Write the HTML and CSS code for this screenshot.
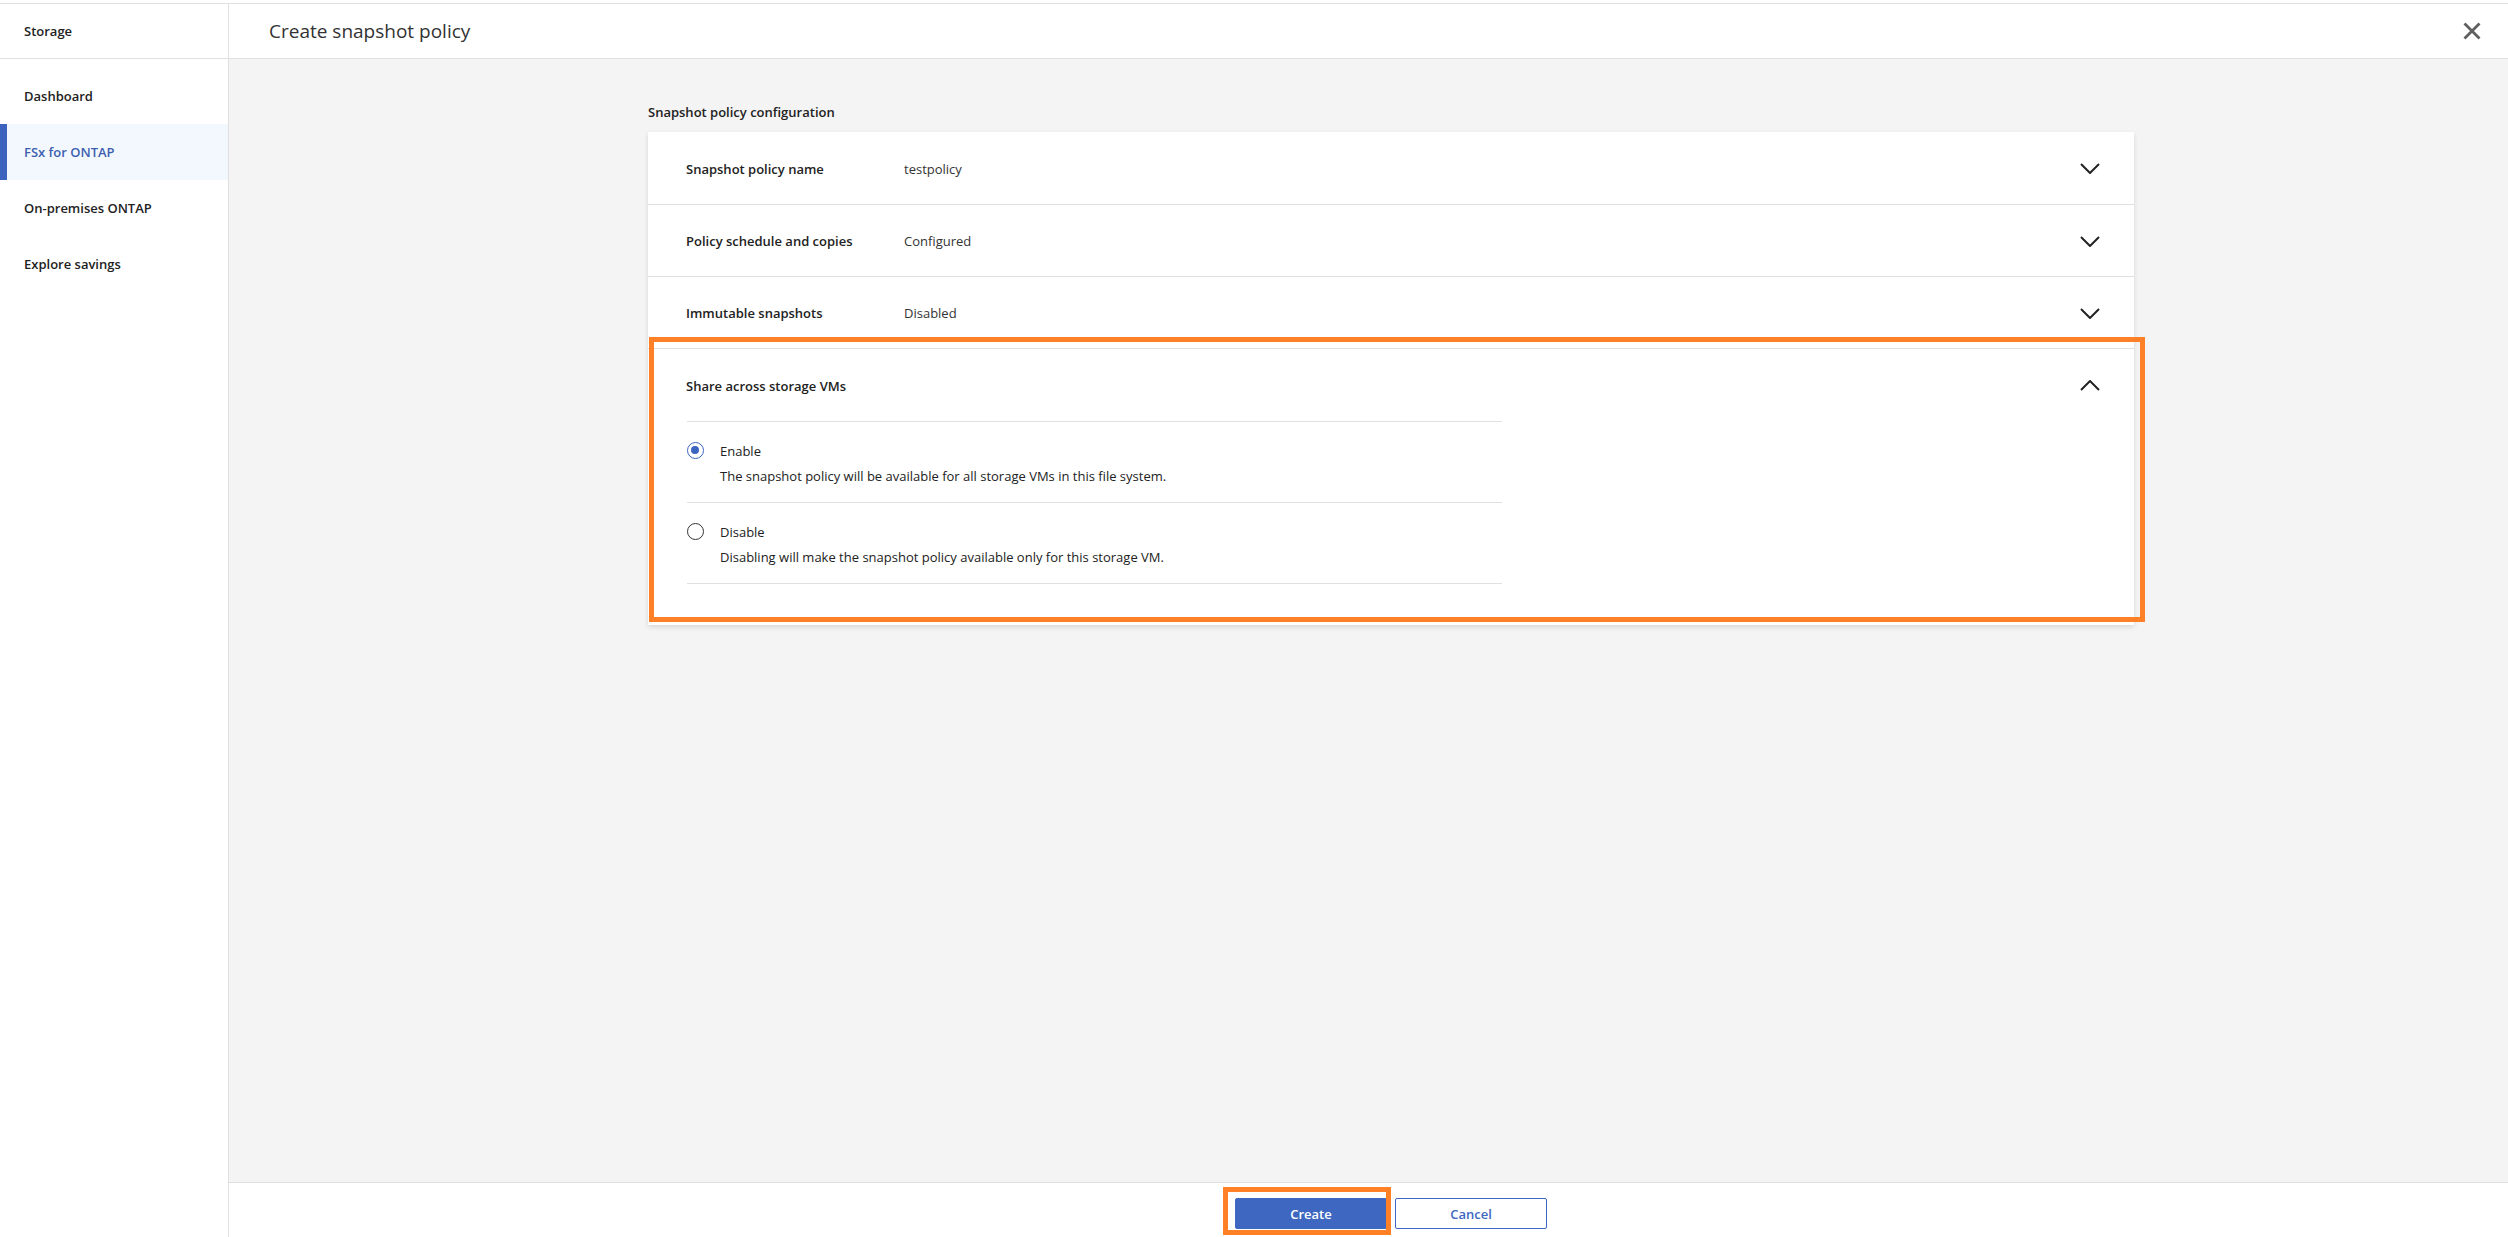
FILE: index.html
```html
<!DOCTYPE html>
<html lang="en">
<head>
    <meta charset="UTF-8">
    <meta name="viewport" content="width=device-width, initial-scale=1.0">
    <title>Create snapshot policy</title>
    <link rel="stylesheet" href="styles.css">
</head>
<body>
    <div class="app">
        <aside class="sidebar">
            <div class="sidebar-head">Storage</div>
            <nav class="nav">
                <a class="nav-item">Dashboard</a>
                <a class="nav-item active">FSx for ONTAP</a>
                <a class="nav-item">On-premises ONTAP</a>
                <a class="nav-item">Explore savings</a>
            </nav>
        </aside>

        <main class="main">
            <header class="main-head">
                <h1>Create snapshot policy</h1>
                <button class="close" aria-label="Close">
                    <svg width="18" height="18" viewBox="0 0 18 18"><path d="M1.5 1.5 L16.5 16.5 M16.5 1.5 L1.5 16.5" stroke="#5f5f5f" stroke-width="2.8" fill="none"/></svg>
                </button>
            </header>

            <section class="content">
                <div class="config">
                    <div class="config-title">Snapshot policy configuration</div>
                    <div class="card">
                        <div class="row">
                            <span class="row-label">Snapshot policy name</span>
                            <span class="row-value">testpolicy</span>
                            <svg class="chevron" width="20" height="11" viewBox="0 0 20 11"><polyline points="1,1 10,10 19,1" stroke="#222" stroke-width="2" fill="none"/></svg>
                        </div>
                        <div class="row">
                            <span class="row-label">Policy schedule and copies</span>
                            <span class="row-value">Configured</span>
                            <svg class="chevron" width="20" height="11" viewBox="0 0 20 11"><polyline points="1,1 10,10 19,1" stroke="#222" stroke-width="2" fill="none"/></svg>
                        </div>
                        <div class="row">
                            <span class="row-label">Immutable snapshots</span>
                            <span class="row-value">Disabled</span>
                            <svg class="chevron" width="20" height="11" viewBox="0 0 20 11"><polyline points="1,1 10,10 19,1" stroke="#222" stroke-width="2" fill="none"/></svg>
                        </div>
                        <div class="section open">
                            <div class="row-head">
                                <span class="row-label">Share across storage VMs</span>
                                <svg class="chevron" width="20" height="11" viewBox="0 0 20 11"><polyline points="1,10 10,1 19,10" stroke="#222" stroke-width="2" fill="none"/></svg>
                            </div>
                            <div class="options">
                                <label class="option">
                                    <span class="radio checked"></span>
                                    <span class="option-text">
                                        <span class="option-title">Enable</span>
                                        <span class="option-desc">The snapshot policy will be available for all storage VMs in this file system.</span>
                                    </span>
                                </label>
                                <label class="option">
                                    <span class="radio"></span>
                                    <span class="option-text">
                                        <span class="option-title">Disable</span>
                                        <span class="option-desc">Disabling will make the snapshot policy available only for this storage VM.</span>
                                    </span>
                                </label>
                            </div>
                            <div class="highlight section-mark"></div>
                        </div>
                    </div>
                </div>
            </section>

            <footer class="footer">
                <div class="actions">
                    <button class="btn primary">Create<span class="highlight btn-mark"></span></button>
                    <button class="btn secondary">Cancel</button>
                </div>
            </footer>
        </main>
    </div>
</body>
</html>
```

FILE: styles.css
```css
* {
    box-sizing: border-box;
}
body {
    margin: 0;
    padding-top: 3px;
    height: 100vh;
    font-family: "Open Sans", "Noto Sans", sans-serif;
    color: #222;
    background: #fff;
    overflow: hidden;
}
.app {
    display: flex;
    height: calc(100vh - 3px);
    border-top: 1px solid #e0e0e0;
}

/* sidebar */
.sidebar {
    width: 229px;
    flex-shrink: 0;
    border-right: 1px solid #e0e0e0;
    background: #fff;
}
.sidebar-head {
    height: 55px;
    border-bottom: 1px solid #e0e0e0;
    display: flex;
    align-items: center;
    padding-left: 24px;
    font-size: 13px;
    font-weight: 600;
}
.nav {
    display: flex;
    flex-direction: column;
    padding-top: 9px;
}
.nav-item {
    height: 56px;
    display: flex;
    align-items: center;
    padding-left: 24px;
    font-size: 13px;
    font-weight: 600;
    color: #222;
}
.nav-item.active {
    background: #f3f8fe;
    color: #3d5fb0;
    box-shadow: inset 7px 0 0 #3b63bd;
}

/* main */
.main {
    flex: 1;
    display: flex;
    flex-direction: column;
    min-width: 0;
}
.main-head {
    height: 55px;
    flex-shrink: 0;
    border-bottom: 1px solid #e0e0e0;
    display: flex;
    align-items: center;
    justify-content: space-between;
    padding: 0 27px 0 40px;
}
.main-head h1 {
    margin: 0;
    font-size: 19px;
    font-weight: 400;
    color: #333;
}
.close {
    border: none;
    background: none;
    padding: 0;
    width: 18px;
    height: 18px;
    cursor: pointer;
}
.content {
    flex: 1;
    background: #f4f4f4;
    padding: 43px 0 0 419px;
}
.config {
    width: 1486px;
}
.config-title {
    font-size: 13px;
    font-weight: 600;
    line-height: 20px;
    margin-bottom: 10px;
}
.card {
    background: #fff;
    box-shadow: 0 2px 5px rgba(0, 0, 0, 0.12);
}
.row,
.row-head {
    height: 72px;
    display: flex;
    align-items: center;
    padding: 1px 34px 0 38px;
    font-size: 13px;
}
.row + .row,
.row + .section {
    border-top: 1px solid #e0e0e0;
}
.row-label {
    width: 218px;
    font-weight: 600;
    color: #222;
}
.row-value {
    color: #333;
}
.chevron {
    margin-left: auto;
}
.section {
    position: relative;
    padding-bottom: 41px;
}
.options {
    width: 815px;
    margin-left: 39px;
    border-top: 1px solid #e0e0e0;
}
.option {
    display: flex;
    align-items: flex-start;
    height: 81px;
    padding-top: 19px;
    border-bottom: 1px solid #e0e0e0;
    font-size: 13px;
}
.radio {
    width: 17px;
    height: 17px;
    margin-top: 1px;
    border: 1.5px solid #333;
    border-radius: 50%;
    flex-shrink: 0;
    margin-right: 16px;
    position: relative;
}
.radio.checked {
    border-color: #3b65c0;
}
.radio.checked::after {
    content: "";
    position: absolute;
    left: 3px;
    top: 3px;
    width: 8px;
    height: 8px;
    border-radius: 50%;
    background: #3b65c0;
}
.option-text {
    display: flex;
    flex-direction: column;
    line-height: 20px;
}
.option-desc {
    margin-top: 5px;
    color: #222;
}

/* annotation boxes */
.highlight {
    position: absolute;
    border: 5px solid #ff8027;
    pointer-events: none;
}
.section-mark {
    top: -12px;
    left: 1px;
    right: -11px;
    bottom: 3px;
}

/* footer */
.footer {
    height: 55px;
    flex-shrink: 0;
    border-top: 1px solid #e0e0e0;
    background: #fff;
    padding: 15px 0 0 419px;
}
.actions {
    width: 1486px;
    display: flex;
    justify-content: center;
    gap: 8px;
}
.btn {
    width: 152px;
    height: 31px;
    border-radius: 2px;
    font-family: "Open Sans", "Noto Sans", sans-serif;
    font-size: 13px;
    font-weight: 600;
    cursor: pointer;
}
.btn.primary {
    position: relative;
    background: #3d67c0;
    border: 1px solid #3d67c0;
    color: #fff;
}
.btn.secondary {
    background: #fff;
    border: 1px solid #3d67c0;
    color: #3d67c0;
}
.btn-mark {
    top: -12px;
    left: -13px;
    right: -5px;
    bottom: -7px;
}
```
